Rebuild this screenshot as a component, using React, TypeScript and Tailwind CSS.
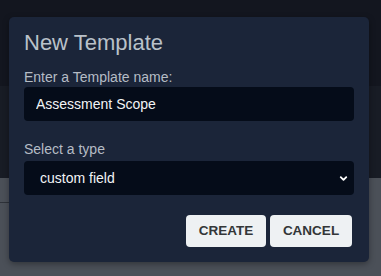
import { ChevronDown } from "lucide-react";

// ─── Backdrop strips (page behind the overlay) ───────────────────────────────

function Backdrop() {
  return (
    <div className="flex h-[276px] w-[381px] flex-col">
      <div className="h-[86px] bg-[#13161f]" />
      <div className="h-[92px] bg-[#181c25]" />
      <div className="flex-1 bg-[#4b5058] pt-[24px]">
        <div className="h-px w-[9px] bg-[#2e3239]" />
      </div>
    </div>
  );
}

// ─── Modal ───────────────────────────────────────────────────────────────────

export default function App() {
  return (
    <div className="relative h-[276px] w-[381px] overflow-hidden font-['Liberation_Sans',Arial,sans-serif]">
      <Backdrop />

      <div className="absolute left-[9px] top-[17px] flex w-[360px] flex-col rounded-[5px] bg-[#1b2539] px-[15px] pb-[15px] pt-[12px] shadow-[0_2px_6px_rgba(0,0,0,0.35)]">
        <h2 className="text-[22px] leading-[28px] text-[#b9c1c9]">New Template</h2>

        <label className="mt-[12px] text-[14px] leading-[16px] text-[#b5bcc5]">
          Enter a Template name:
        </label>
        <input
          className="mt-[2px] h-[34px] w-full rounded-[4px] bg-[#050c19] px-[12px] text-[14px] text-[#f2f4f6] outline-none"
          defaultValue="Assessment Scope"
        />

        <label className="mt-[20px] text-[14px] leading-[16px] text-[#b5bcc5]">
          Select a type
        </label>
        <div className="relative mt-[4px]">
          <select
            className="h-[34px] w-full appearance-none rounded-[4px] bg-[#050c19] pl-[16px] text-[14px] text-[#f2f4f6] outline-none"
            defaultValue="custom field"
          >
            <option>custom field</option>
          </select>
          <ChevronDown
            size={11}
            strokeWidth={4}
            className="pointer-events-none absolute right-[5px] top-[12px] text-white"
          />
        </div>

        <div className="mt-[20px] flex justify-end gap-[4px] pr-[2px]">
          <button className="h-[32px] w-[80px] rounded-[4px] bg-[#eef1f3] text-[13.5px] font-bold text-[#333638]">
            CREATE
          </button>
          <button className="h-[32px] w-[82px] rounded-[4px] bg-[#eef1f3] text-[13.5px] font-bold text-[#333638]">
            CANCEL
          </button>
        </div>
      </div>
    </div>
  );
}
